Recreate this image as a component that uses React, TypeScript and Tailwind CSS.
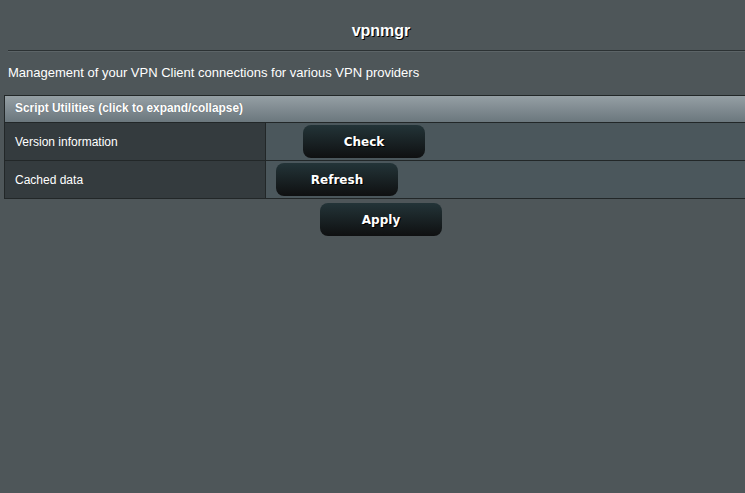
import React from "react";

const btn =
  "h-[33px] w-[122px] rounded-[8px] bg-[linear-gradient(#233438_0%,#0f1011_100%)] text-white text-[12px] font-bold [font-family:'DejaVu_Sans',Verdana,sans-serif] [text-shadow:1px_1px_0_#000] flex items-center justify-center";

export default function App() {
  return (
    <div className="w-[745px] h-[493px] overflow-hidden bg-[#4e5659] [font-family:'Liberation_Sans',Arial,sans-serif] text-white">
      <div className="w-[754px] ml-[4px]">
        <div className="pt-[21px] h-[50px] text-center text-[16px] leading-[20px] font-bold [text-shadow:1px_1px_0_#000]">
          vpnmgr
        </div>
        <div className="ml-[4px] border-t border-[#2c3234] border-b border-b-[#5c6467]" />
        <div className="pt-[13px] pl-[4px] text-[13px] leading-[16px] h-[43px]">
          Management of your VPN Client connections for various VPN providers
        </div>
        <div className="border border-[#222728]">
          <div className="h-[27px] flex items-center pl-[10px] bg-[linear-gradient(#959fa4_0%,#6b777d_100%)] text-[11.9px] font-bold border-b border-[#222728] [text-shadow:0_0_1px_rgba(0,0,0,0.3)]">
            Script Utilities (click to expand/collapse)
          </div>
          <div className="flex h-[38px] border-b border-[#222728]">
            <div className="w-[261px] bg-[#343b3e] border-r border-[#222728] flex items-center pl-[10px] text-[12px]">
              Version information
            </div>
            <div className="flex-1 bg-[#4b575c] flex items-center pl-[37px]">
              <div className={btn}>Check</div>
            </div>
          </div>
          <div className="flex h-[37px]">
            <div className="w-[261px] bg-[#343b3e] border-r border-[#222728] flex items-center pl-[10px] text-[12px]">
              Cached data
            </div>
            <div className="flex-1 bg-[#4b575c] flex items-center pl-[10px]">
              <div className={btn}>Refresh</div>
            </div>
          </div>
        </div>
        <div className="flex justify-center pt-[4px]">
          <div className={btn + " h-[32px]"}>Apply</div>
        </div>
      </div>
    </div>
  );
}
